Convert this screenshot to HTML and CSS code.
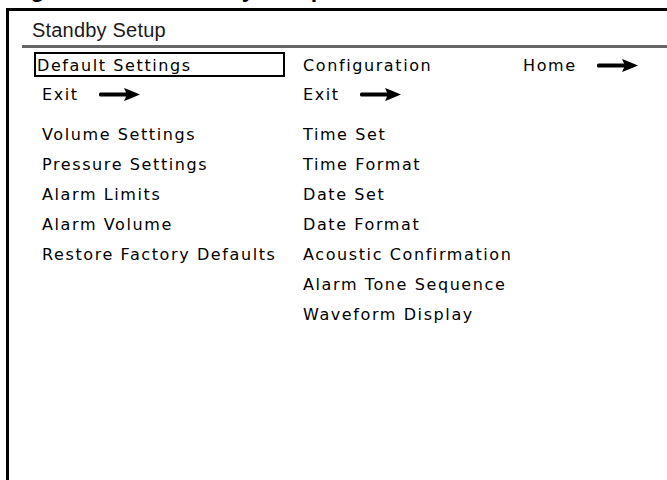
FILE: index.html
```html
<!DOCTYPE html>
<html lang="en">
<head>
  <meta charset="UTF-8">
  <meta name="viewport" content="width=device-width, initial-scale=1.0">
  <title>Standby Setup</title>
  <link rel="stylesheet" href="styles.css">
</head>
<body>
  <div class="caption"><span class="fig-no">Figure 4-11.</span>Standby Setup Screen</div>
  <div class="screen">
    <div class="title">Standby Setup</div>
    <div class="rule"></div>
    <div class="menu">
      <div class="opt selected">Default Settings</div>
      <div class="opt">Configuration</div>
      <div class="opt">Home <svg class="arrow" width="41" height="13" viewBox="0 0 41 13"><rect x="0" y="4.5" width="30" height="4" rx="1.5"/><path d="M25 0 L29 1.5 L41 6.5 L29 11.5 L25 13 L28 6.5 Z"/></svg></div>

      <div class="exit pad">Exit <svg class="arrow" width="41" height="13" viewBox="0 0 41 13"><rect x="0" y="4.5" width="30" height="4" rx="1.5"/><path d="M25 0 L29 1.5 L41 6.5 L29 11.5 L25 13 L28 6.5 Z"/></svg></div>
      <div class="exit">Exit <svg class="arrow" width="41" height="13" viewBox="0 0 41 13"><rect x="0" y="4.5" width="30" height="4" rx="1.5"/><path d="M25 0 L29 1.5 L41 6.5 L29 11.5 L25 13 L28 6.5 Z"/></svg></div>
      <div></div>

      <ul class="list pad">
        <li>Volume Settings</li>
        <li>Pressure Settings</li>
        <li>Alarm Limits</li>
        <li>Alarm Volume</li>
        <li>Restore Factory Defaults</li>
      </ul>
      <ul class="list">
        <li>Time Set</li>
        <li>Time Format</li>
        <li>Date Set</li>
        <li>Date Format</li>
        <li>Acoustic Confirmation</li>
        <li>Alarm Tone Sequence</li>
        <li>Waveform Display</li>
      </ul>
    </div>
  </div>
</body>
</html>
```

FILE: styles.css
```css
body {
  margin: 0;
  background-color: #fff;
  overflow: hidden;
  height: 480px;
}

.caption {
  font-family: "Liberation Sans", Arial, sans-serif;
  font-weight: bold;
  font-size: 23px;
  line-height: 20px;
  height: 20px;
  margin-top: -21px;
  padding-left: 10px;
  white-space: nowrap;
  color: #000;
}

.fig-no {
  margin-right: 26px;
}

.screen {
  margin: 9px 0 0 6px;
  border-top: 3px solid #000;
  border-left: 3px solid #000;
  height: 469px;
}

.title {
  font-family: "Liberation Sans", Arial, sans-serif;
  font-size: 20px;
  line-height: 24px;
  padding: 7px 0 0 23px;
  letter-spacing: 0.2px;
  color: #1a1a1a;
}

.rule {
  margin: 3px 0 0 13px;
  height: 3px;
  background-color: #666;
}

.menu {
  display: grid;
  grid-template-columns: 269px 220px 1fr;
  margin-top: 4px;
  padding-left: 25px;
  font-family: "DejaVu Sans", sans-serif;
  font-size: 16px;
  letter-spacing: 1.6px;
  color: #000;
}

.opt {
  height: 25px;
  line-height: 19px;
  padding-top: 4px;
  box-sizing: border-box;
  white-space: nowrap;
}

.selected {
  width: 251px;
  border: 2px solid #000;
  padding: 2px 0 0 1px;
}

.exit {
  margin-top: 3px;
  line-height: 30px;
  white-space: nowrap;
}

.pad {
  padding-left: 8px;
}

.arrow {
  vertical-align: middle;
  margin-left: 14px;
  margin-top: -3px;
}

.list {
  list-style: none;
  margin: 10px 0 0 0;
  padding-top: 0;
  padding-right: 0;
  padding-bottom: 0;
}

.list.pad {
  padding-left: 8px;
}

.list:not(.pad) {
  padding-left: 0;
}

.list li {
  line-height: 30px;
  white-space: nowrap;
}
```
